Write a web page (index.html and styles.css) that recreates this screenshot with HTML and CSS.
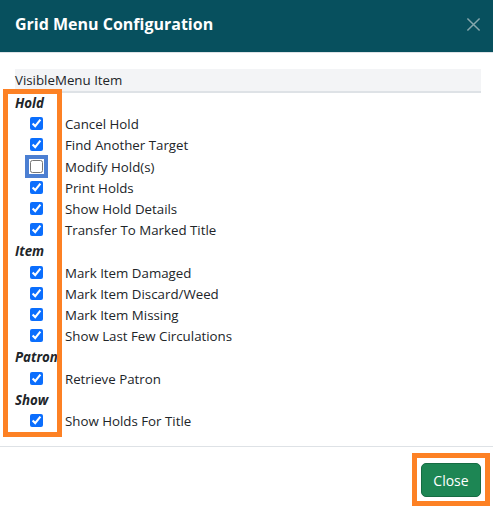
FILE: index.html
```html
<!DOCTYPE html>
<html lang="en">
<head>
<meta charset="utf-8">
<title>Grid Menu Configuration</title>
<link rel="stylesheet" href="styles.css">
</head>
<body>
<div class="modal">
  <div class="modal-header">
    <h5 class="modal-title">Grid Menu Configuration</h5>
    <button class="btn-x" type="button" aria-label="Close">
      <svg width="16" height="16" viewBox="0 0 16 16"><path d="M1.5 1.5 L14.5 14.5 M14.5 1.5 L1.5 14.5" stroke="currentColor" stroke-width="1.6" fill="none"/></svg>
    </button>
  </div>
  <div class="modal-body">
    <table class="grid">
      <thead>
        <tr><th class="col-vis">Visible</th><th class="col-name">Menu Item</th></tr>
      </thead>
      <tbody>
        <tr class="group"><td colspan="2"><span class="group-label">Hold</span></td></tr>
        <tr><td class="cell-check"><input type="checkbox" checked></td><td class="cell-name">Cancel Hold</td></tr>
        <tr><td class="cell-check"><input type="checkbox" checked></td><td class="cell-name">Find Another Target</td></tr>
        <tr><td class="cell-check"><input type="checkbox" class="focused"></td><td class="cell-name">Modify Hold(s)</td></tr>
        <tr><td class="cell-check"><input type="checkbox" checked></td><td class="cell-name">Print Holds</td></tr>
        <tr><td class="cell-check"><input type="checkbox" checked></td><td class="cell-name">Show Hold Details</td></tr>
        <tr><td class="cell-check"><input type="checkbox" checked></td><td class="cell-name">Transfer To Marked Title</td></tr>
        <tr class="group"><td colspan="2"><span class="group-label">Item</span></td></tr>
        <tr><td class="cell-check"><input type="checkbox" checked></td><td class="cell-name">Mark Item Damaged</td></tr>
        <tr><td class="cell-check"><input type="checkbox" checked></td><td class="cell-name">Mark Item Discard/Weed</td></tr>
        <tr><td class="cell-check"><input type="checkbox" checked></td><td class="cell-name">Mark Item Missing</td></tr>
        <tr><td class="cell-check"><input type="checkbox" checked></td><td class="cell-name">Show Last Few Circulations</td></tr>
        <tr class="group"><td colspan="2"><span class="group-label">Patron</span></td></tr>
        <tr><td class="cell-check"><input type="checkbox" checked></td><td class="cell-name">Retrieve Patron</td></tr>
        <tr class="group"><td colspan="2"><span class="group-label">Show</span></td></tr>
        <tr><td class="cell-check"><input type="checkbox" checked></td><td class="cell-name">Show Holds For Title</td></tr>
      </tbody>
    </table>
  </div>
  <div class="modal-footer">
    <button class="btn-close" type="button">Close</button>
  </div>
</div>
<div class="annot annot-col"></div>
<div class="annot annot-btn"></div>
</body>
</html>
```
FILE: styles.css
```css
html, body {
  margin: 0;
  padding: 0;
  background: #fff;
}
body {
  font-family: "Open Sans", "Noto Sans", "Liberation Sans", sans-serif;
  font-size: 13.3px;
  color: #212529;
  width: 493px;
  height: 507px;
  overflow: hidden;
  position: relative;
}
.modal {
  display: flex;
  flex-direction: column;
}
.modal-header {
  height: 52px;
  background: #07505e;
  border-bottom: 1px solid #dee2e6;
  display: flex;
  align-items: center;
  justify-content: space-between;
  padding: 0 12px 0 15px;
}
.modal-title {
  margin: 0;
  color: #fff;
  font-size: 16px;
  font-weight: 700;
  line-height: 1;
  padding-bottom: 4px;
}
.btn-x {
  border: 0;
  background: transparent;
  color: #86a7ad;
  padding: 0;
  width: 15px;
  height: 15px;
  display: flex;
  margin-bottom: 4px;
}
.btn-x svg {
  width: 15px;
  height: 15px;
}
.modal-body {
  padding: 16px 12px 14px 15px;
}
.grid {
  width: 100%;
  border-collapse: collapse;
}
.grid thead tr {
  background: #f3f4f6;
  border-bottom: 2px solid #dee2e6;
}
.grid th {
  font-weight: 400;
  text-align: left;
  padding: 0;
  height: 22px;
  line-height: 22px;
  white-space: nowrap;
}
.col-vis {
  width: 1%;
}
.grid td {
  padding: 0;
  height: 21.2px;
  line-height: 21px;
}
.group-label {
  font-weight: 700;
  font-style: italic;
  white-space: nowrap;
}
.grid td.cell-check {
  text-align: center;
  padding-left: 3px;
}
.cell-check input {
  margin: 0;
  width: 13px;
  height: 13px;
  vertical-align: -1px;
  accent-color: #0b6efd;
}
.cell-check input.focused {
  outline: 4px solid #4c7fd2;
  outline-offset: 1px;
}
.grid td.cell-name {
  padding-left: 10px;
}
.modal-footer {
  border-top: 1px solid #dee2e6;
  display: flex;
  justify-content: flex-end;
  padding: 16px 12px 0 0;
}
.btn-close {
  width: 60px;
  height: 34px;
  background: #1d8654;
  border: 1px solid #166c43;
  border-radius: 5px;
  color: #fff;
  font-family: inherit;
  font-size: 14px;
  padding: 0;
}
.annot {
  position: absolute;
  border: 5px solid #fd8124;
  box-sizing: border-box;
  pointer-events: none;
}
.annot-col {
  left: 3px;
  top: 89px;
  width: 59px;
  height: 348px;
}
.annot-btn {
  left: 412px;
  top: 453px;
  width: 78px;
  height: 53px;
}
```
